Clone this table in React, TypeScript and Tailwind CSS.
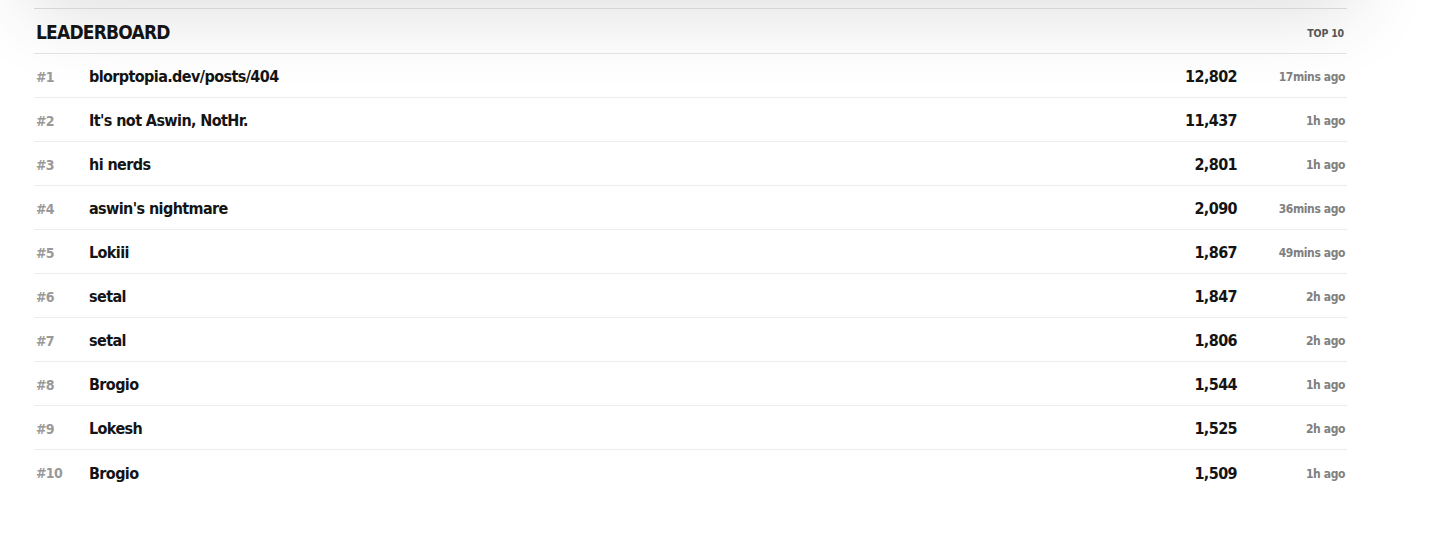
import React from "react";

const rows = [
  { r: 1, name: "blorptopia.dev/posts/404", score: "12,802", t: "17mins ago" },
  { r: 2, name: "It's not Aswin, NotHr.", score: "11,437", t: "1h ago" },
  { r: 3, name: "hi nerds", score: "2,801", t: "1h ago" },
  { r: 4, name: "aswin's nightmare", score: "2,090", t: "36mins ago" },
  { r: 5, name: "Lokiii", score: "1,867", t: "49mins ago" },
  { r: 6, name: "setal", score: "1,847", t: "2h ago" },
  { r: 7, name: "setal", score: "1,806", t: "2h ago" },
  { r: 8, name: "Brogio", score: "1,544", t: "1h ago" },
  { r: 9, name: "Lokesh", score: "1,525", t: "2h ago" },
  { r: 10, name: "Brogio", score: "1,509", t: "1h ago" },
];

export default function App() {
  return (
    <div
      className="w-[1434px] h-[544px] bg-white overflow-hidden relative"
      style={{ fontFamily: '"DejaVu Sans Condensed", "Liberation Sans", sans-serif' }}
    >
      <div className="absolute left-[60px] right-[110px] top-[-110px] h-[90px] shadow-[0_0_80px_30px_rgba(0,0,0,0.14)]" />
      <div className="relative pt-[8px] pl-[34px] w-[1347px]">
        <div className="border-t border-[#d6d6d6]">
          <div className="flex items-center justify-between h-[45px] border-b border-[#e2e2e2] pl-[2px] pr-[3px] pt-[2px]">
            <span className="text-[19px] font-bold text-[#141414] uppercase tracking-[-0.8px]">Leaderboard</span>
            <span className="text-[10.5px] font-bold text-[#555] uppercase pt-[4px] tracking-[-0.2px]">Top 10</span>
          </div>
          {rows.map((row, i) => (
            <div
              key={i}
              className={`flex items-center h-[44px] pt-[3px] ${i < rows.length - 1 ? "border-b border-[#ececec]" : ""}`}
            >
              <span className="w-[55px] pl-[2px] text-[14px] font-bold text-[#999] tracking-[-0.7px]">#{row.r}</span>
              <span className="flex-1 text-[16px] font-bold text-[#141414] tracking-[-0.6px]">{row.name}</span>
              <span className="w-[120px] text-right text-[16px] font-bold text-[#141414] tracking-[-0.6px]">{row.score}</span>
              <span className="w-[110px] text-right pr-[2px] text-[12px] font-bold text-[#808080] tracking-[-0.4px]">{row.t}</span>
            </div>
          ))}
        </div>
      </div>
    </div>
  );
}
